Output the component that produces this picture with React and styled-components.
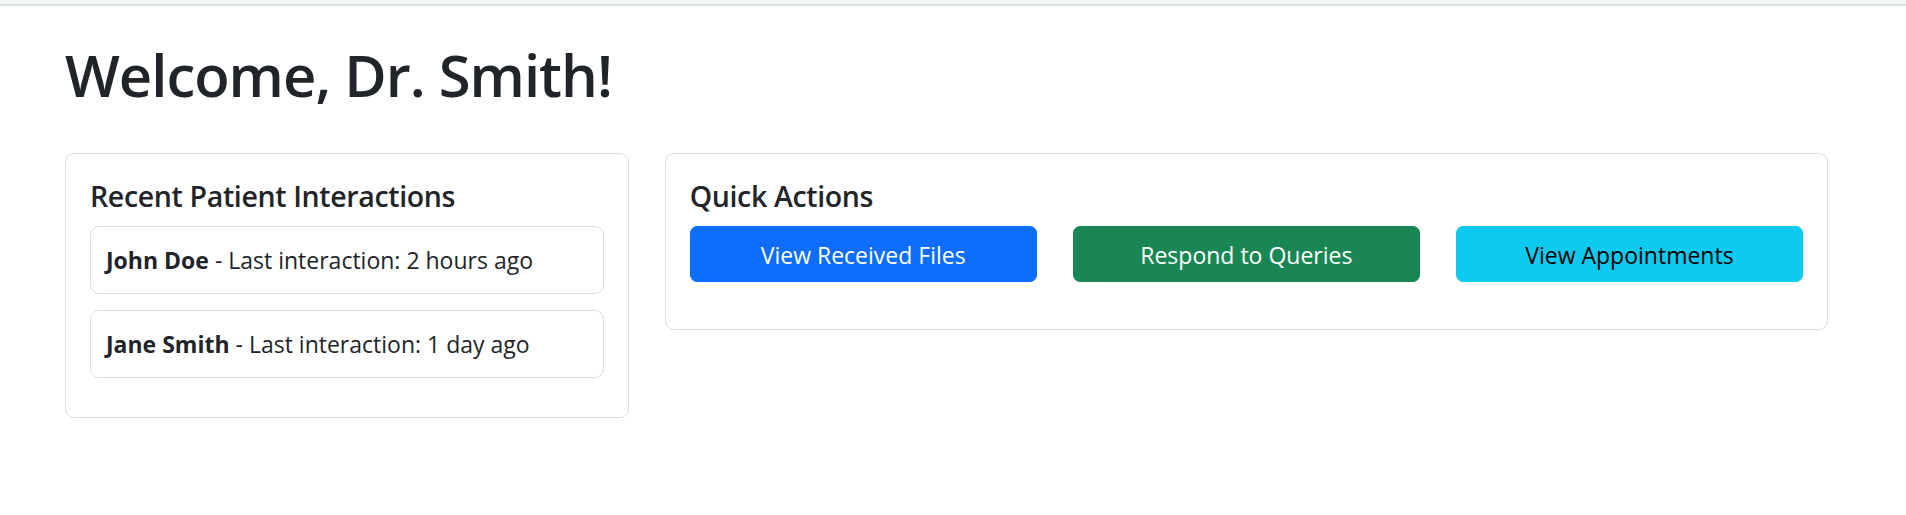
import React from "react";
import styled, { createGlobalStyle } from "styled-components";

const GlobalStyle = createGlobalStyle`
    * {
        box-sizing: border-box;
    }
    body {
        margin: 0;
        background: #fff;
        color: #212529;
        font-family: "Open Sans", "Noto Sans", sans-serif;
    }
`;

const interactions = [
    { name: "John Doe", last: "2 hours ago" },
    { name: "Jane Smith", last: "1 day ago" },
];

const actions = [
    { label: "View Received Files", variant: "primary" },
    { label: "Respond to Queries", variant: "success" },
    { label: "View Appointments", variant: "info" },
];

const variants = {
    primary: { bg: "#0d6efd", fg: "#fff" },
    success: { bg: "#198754", fg: "#fff" },
    info: { bg: "#0dcaf0", fg: "#000" },
};

const App = () => {
    return (
        <>
            <GlobalStyle />
            <TopStrip />
            <Container>
                <Heading>Welcome, Dr. Smith!</Heading>
                <Row>
                    <Card>
                        <CardTitle>Recent Patient Interactions</CardTitle>
                        {interactions.map((item) => (
                            <InteractionItem key={item.name}>
                                <strong>{item.name}</strong> - Last interaction: {item.last}
                            </InteractionItem>
                        ))}
                    </Card>
                    <Card>
                        <CardTitle>Quick Actions</CardTitle>
                        <ButtonRow>
                            {actions.map((a) => (
                                <ActionButton key={a.label} $variant={a.variant}>
                                    {a.label}
                                </ActionButton>
                            ))}
                        </ButtonRow>
                    </Card>
                </Row>
            </Container>
        </>
    );
};

export default App;

const TopStrip = styled.div`
    height: 6px;
    background: #f3f8f7;
    border-bottom: 2px solid #d7e1de;
`;

const Container = styled.main`
    padding: 0 78px 40px 65px;
`;

const Heading = styled.h1`
    margin: 33px 0 42px;
    font-size: 58px;
    line-height: 72px;
    font-weight: 600;
    letter-spacing: -1px;
`;

const Row = styled.div`
    display: grid;
    grid-template-columns: calc((100% + 36px) / 3 - 36px) 1fr;
    column-gap: 36px;
    align-items: start;
`;

const Card = styled.section`
    border: 1px solid #dedede;
    border-radius: 9px;
    padding: 24px;
`;

const CardTitle = styled.h5`
    margin: 0 0 12px;
    font-size: 28.5px;
    line-height: 36px;
    font-weight: 600;
    letter-spacing: -0.35px;
`;

const InteractionItem = styled.div`
    border: 1px solid #dedede;
    border-radius: 9px;
    padding: 15px 15px;
    margin-bottom: 16px;
    font-size: 23px;
    line-height: 36px;

    &:last-child {
        margin-bottom: 15px;
    }

    strong {
        font-weight: 700;
    }
`;

const ButtonRow = styled.div`
    display: grid;
    grid-template-columns: repeat(3, 1fr);
    column-gap: 36px;
    margin-bottom: 23px;
`;

const ActionButton = styled.button`
    height: 56px;
    border: 1px solid ${({ $variant }) => variants[$variant].bg};
    border-radius: 7px;
    background: ${({ $variant }) => variants[$variant].bg};
    color: ${({ $variant }) => variants[$variant].fg};
    font-family: inherit;
    font-size: 23px;
    line-height: 36px;
    padding: 10px 18px 8px;
    cursor: pointer;
`;
